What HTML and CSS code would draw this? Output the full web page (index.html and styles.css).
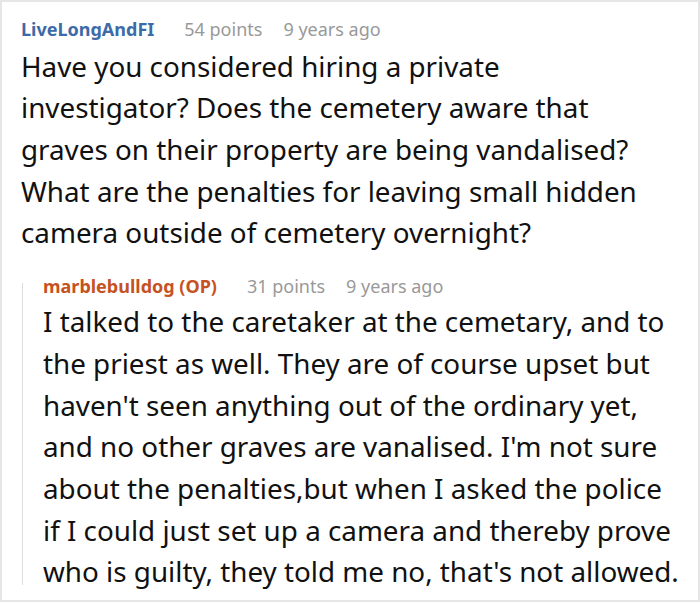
FILE: index.html
```html
<!DOCTYPE html>
<html>
<head>
<meta charset="utf-8">
<link rel="stylesheet" href="styles.css">
</head>
<body>
<div class="frame">
  <div class="comment">
    <div class="meta">
      <span class="user">LiveLongAndFI</span>
      <span class="info">54 points</span>
      <span class="info">9 years ago</span>
    </div>
    <p class="text parent-text">Have you considered hiring a private investigator? Does the cemetery aware that graves on their property are being vandalised? What are the penalties for leaving small hidden camera outside of cemetery overnight?</p>
    <div class="reply">
      <div class="rule"></div>
      <div class="reply-body">
        <div class="meta">
          <span class="user op">marblebulldog (OP)</span>
          <span class="info">31 points</span>
          <span class="info">9 years ago</span>
        </div>
        <p class="text reply-text">I talked to the caretaker at the cemetary, and to the priest as well. They are of course upset but haven't seen anything out of the ordinary yet, and no other graves are vanalised. I'm not sure about the penalties,but when I asked the police if I could just set up a camera and thereby prove who is guilty, they told me no, that's not allowed.</p>
      </div>
    </div>
  </div>
</div>
</body>
</html>
```

FILE: styles.css
```css
html, body {
  margin: 0;
  padding: 0;
  background: #fff;
}
body {
  font-family: "Noto Sans", "Open Sans", sans-serif;
  color: #111;
}
.frame {
  width: 700px;
  height: 602px;
  box-sizing: border-box;
  border: 2px solid #e6e6e6;
  overflow: hidden;
}
.comment {
  padding: 15px 16px 0 19px;
}
.meta {
  display: flex;
  align-items: baseline;
  gap: 21px;
  font-size: 18px;
  line-height: 24px;
  height: 24px;
  white-space: nowrap;
}
.user {
  font-weight: 700;
  color: #3d6ba7;
  margin-right: 9px;
}
.user.op {
  color: #c5531f;
}
.info {
  color: #999;
}
.text {
  margin: 4.7px 0 0 0;
  font-size: 27.8px;
  line-height: 1.5;
}
.parent-text {
  max-width: 640px;
}
.reply {
  display: flex;
  margin-top: 19.8px;
}
.rule {
  width: 1px;
  background: #dcdcdc;
  margin: 9px 0 8px 1px;
  flex: none;
}
.reply-body {
  padding-left: 20px;
  flex: 1;
  min-width: 0;
}
.reply-text {
  margin-top: 3.4px;
}
```
